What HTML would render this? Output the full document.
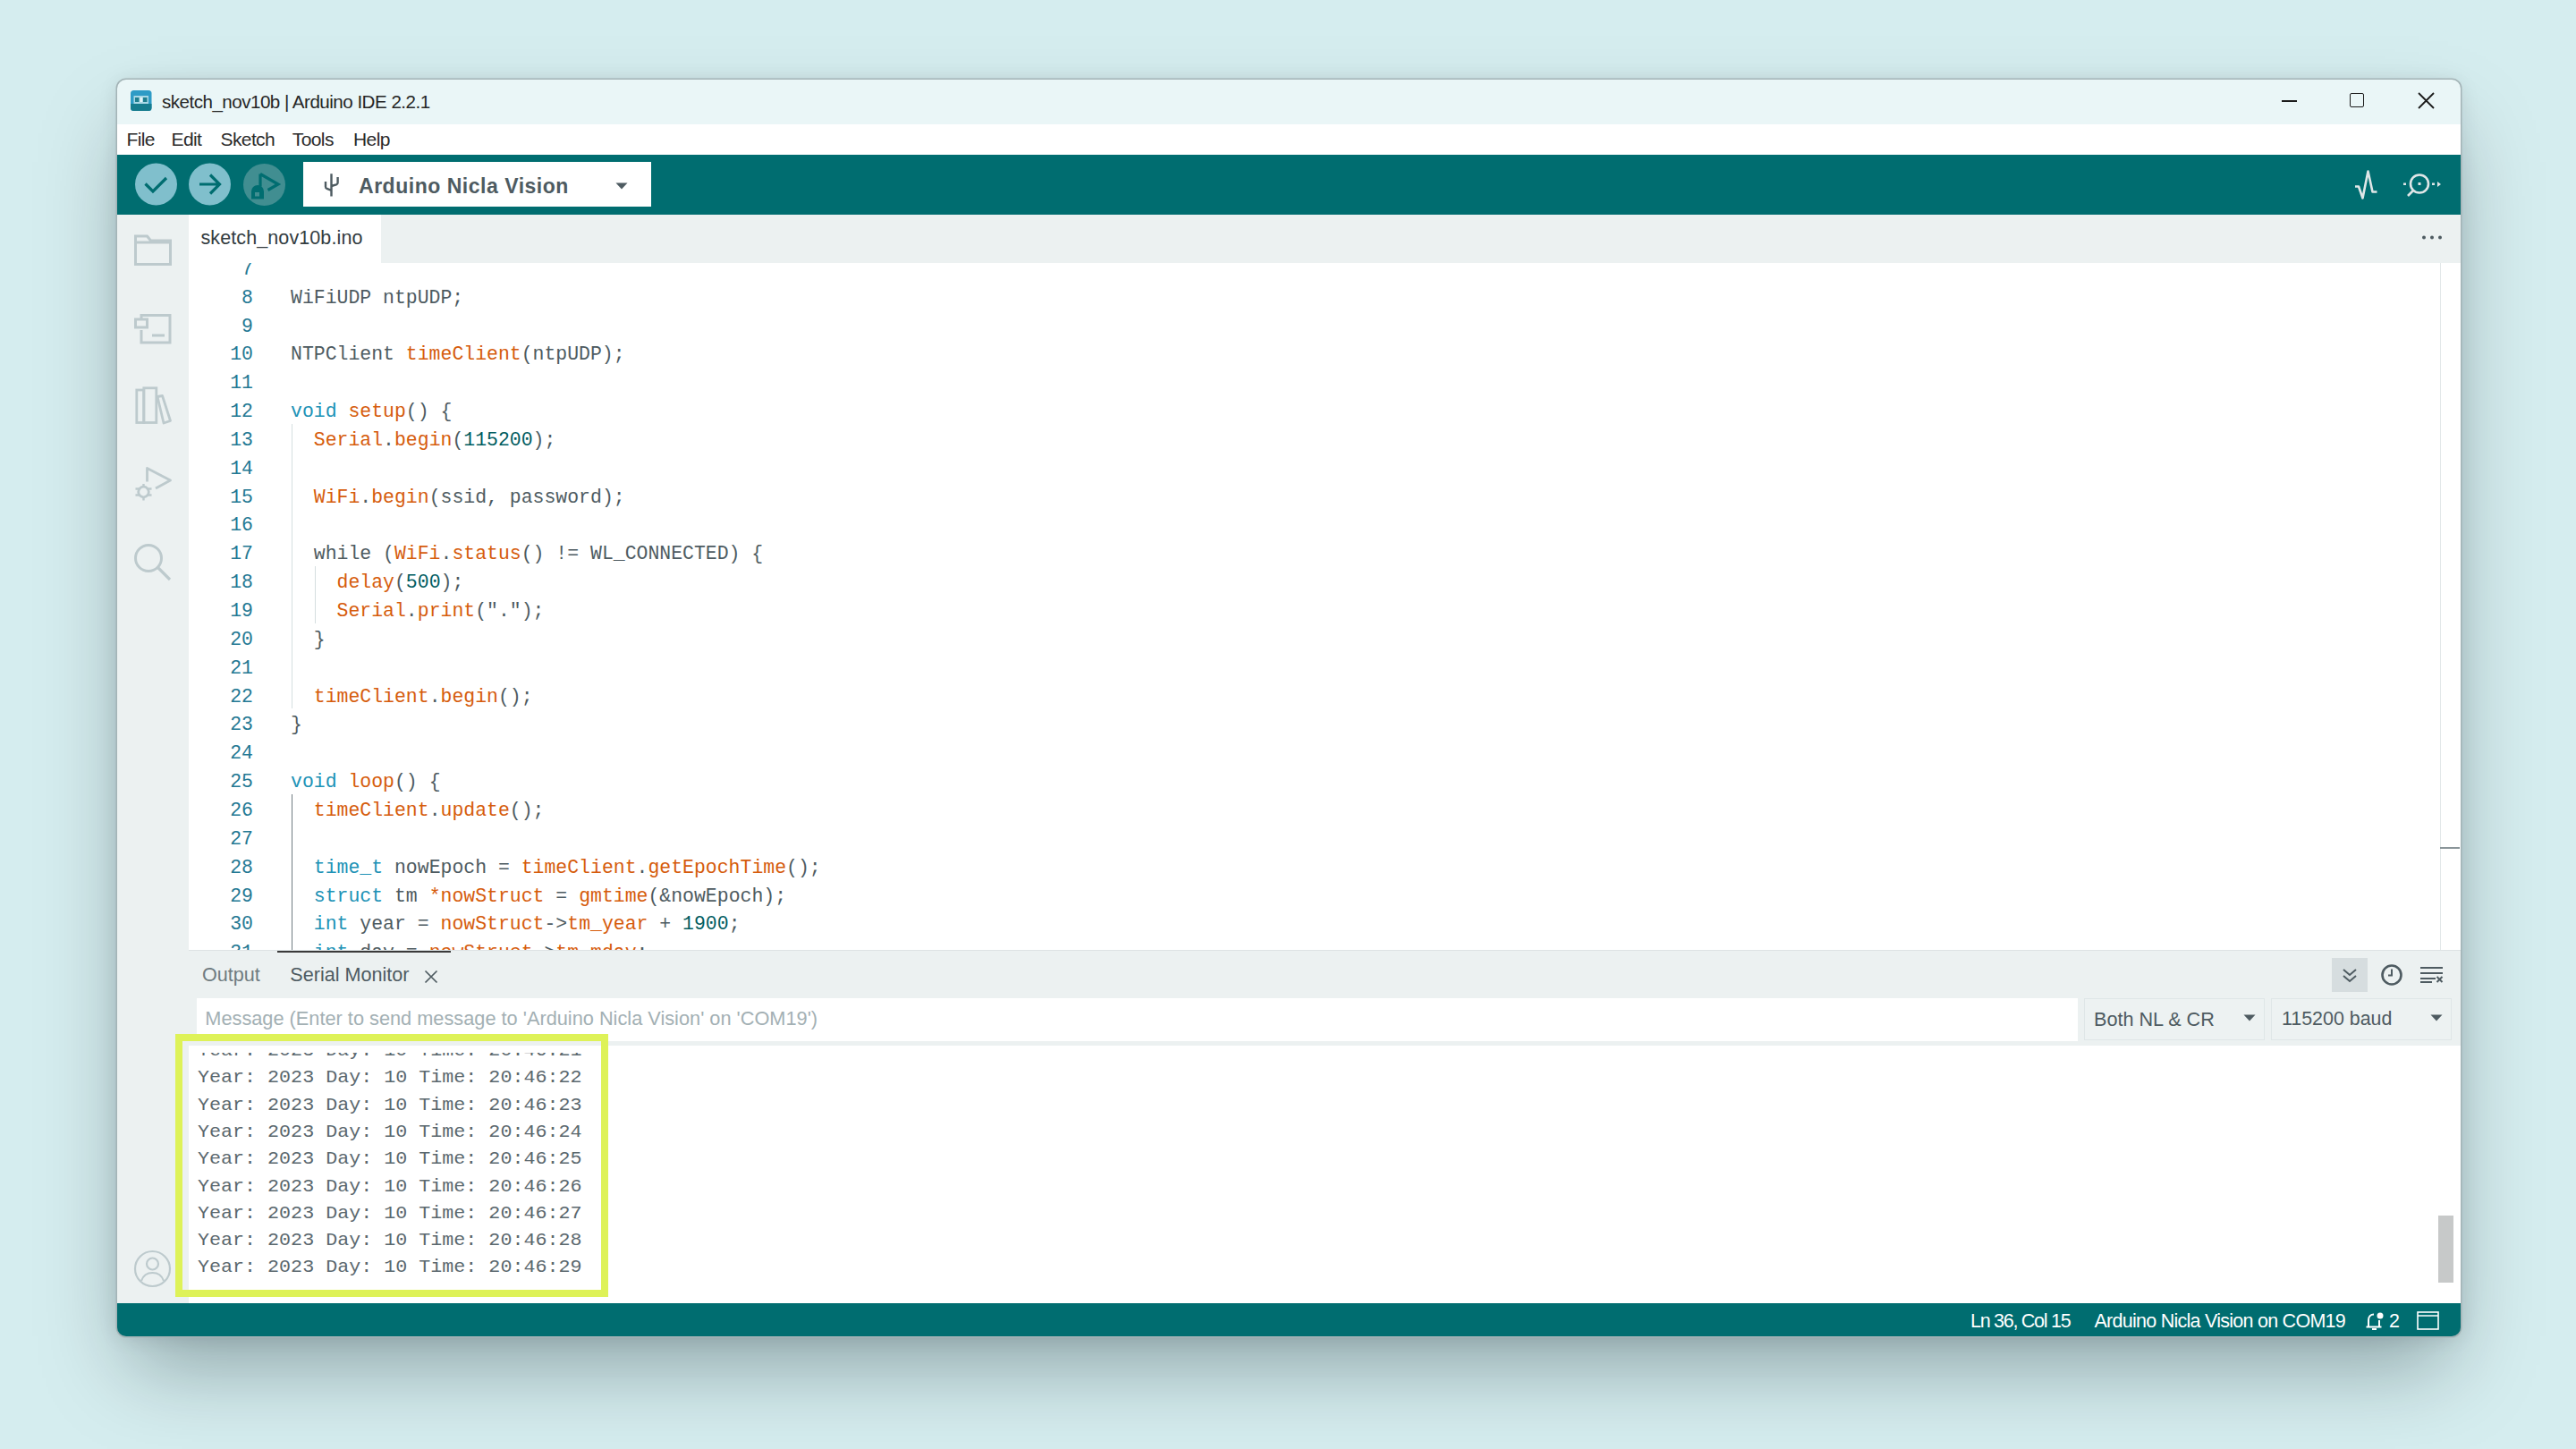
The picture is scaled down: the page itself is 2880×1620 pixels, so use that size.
<!DOCTYPE html>
<html><head><meta charset="utf-8">
<style>
html,body{margin:0;padding:0;}
body{width:2880px;height:1620px;overflow:hidden;background:#d5edef;position:relative;font-family:"Liberation Sans",sans-serif;}
.a{position:absolute;}
#shadow{position:absolute;left:131px;top:89px;width:2620px;height:1405px;border-radius:10px;background:#9fb2b5;
 box-shadow:0 0 0 1.5px #a3b3b6, 0 46px 90px -14px rgba(0,20,25,0.34), 0 2px 22px rgba(0,20,25,0.10);}
#win{position:absolute;left:0;top:0;width:2880px;height:1620px;clip-path:inset(89px 129px 126px 131px round 10px);}
.t{position:absolute;white-space:pre;line-height:1;}
.m{font-family:"Liberation Mono",monospace;}
.k{color:#2092b6}.f{color:#d65c0c}.n{color:#005c5f}
</style></head><body>
<div id="shadow"></div>
<div id="win">
<div class="a" style="left:131px;top:89px;width:2620px;height:50px;background:#eaf6f7"></div>
<div class="a" style="left:131px;top:139px;width:2620px;height:34px;background:#ffffff"></div>
<div class="a" style="left:131px;top:173px;width:2620px;height:67px;background:#006d70"></div>
<div class="a" style="left:131px;top:240px;width:80px;height:1218px;background:#ecf1f1"></div>
<div class="a" style="left:211px;top:240px;width:2540px;height:54px;background:#ecf1f1"></div>
<div class="a" style="left:211px;top:240px;width:215px;height:54px;background:#ffffff"></div>
<div class="a" style="left:211px;top:294px;width:2540px;height:769px;background:#ffffff"></div>
<div class="a" style="left:211px;top:1063px;width:2540px;height:106px;background:#ecf1f1"></div>
<div class="a" style="left:211px;top:1169px;width:2540px;height:289px;background:#ffffff"></div>
<div class="a" style="left:131px;top:1457.2px;width:2620px;height:37px;background:#006d70"></div>
<div class="t" style="left:181.0px;top:103.7px;font-size:20.6px;color:#262626;letter-spacing:-0.52px;font-weight:normal;">sketch_nov10b | Arduino IDE 2.2.1</div>
<svg class="a" style="left:146px;top:101px" width="24" height="24" viewBox="0 0 24 24">
<rect x="0" y="0" width="23.5" height="23" rx="3.5" fill="#2e9bc6"/>
<path d="M0 15h23.5v4.5a3.5 3.5 0 0 1 -3.5 3.5h-16.5a3.5 3.5 0 0 1 -3.5 -3.5z" fill="#167c8e"/>
<rect x="3.5" y="6" width="16.5" height="9" fill="#a9d8e6"/>
<rect x="5" y="8" width="4.5" height="5" fill="#1f7f8f"/>
<rect x="10.5" y="8" width="2.5" height="5" fill="#e6f3f6"/>
<rect x="14" y="8" width="4.5" height="5" fill="#1f7f8f"/>
</svg>
<div class="a" style="left:2551px;top:112px;width:17px;height:1.5px;background:#1b1b1b"></div>
<div class="a" style="left:2627px;top:104px;width:13.6px;height:14px;border:1.8px solid #1b1b1b;border-radius:2px"></div>
<svg class="a" style="left:2703px;top:103px" width="19" height="19" viewBox="0 0 19 19"><path d="M1 1L18 18M18 1L1 18" stroke="#1b1b1b" stroke-width="1.8"/></svg>
<div class="t" style="left:141.5px;top:144.7px;font-size:21px;color:#2b2b2b;letter-spacing:-0.6px;font-weight:normal;">File</div>
<div class="t" style="left:191.5px;top:144.7px;font-size:21px;color:#2b2b2b;letter-spacing:-0.6px;font-weight:normal;">Edit</div>
<div class="t" style="left:246.5px;top:144.7px;font-size:21px;color:#2b2b2b;letter-spacing:-0.6px;font-weight:normal;">Sketch</div>
<div class="t" style="left:326.8px;top:144.7px;font-size:21px;color:#2b2b2b;letter-spacing:-0.6px;font-weight:normal;">Tools</div>
<div class="t" style="left:395.0px;top:144.7px;font-size:21px;color:#2b2b2b;letter-spacing:-0.6px;font-weight:normal;">Help</div>
<svg class="a" style="left:150px;top:181px" width="170" height="50" viewBox="0 0 170 50">
<circle cx="24.5" cy="25" r="23.5" fill="#80bfcc"/>
<path d="M12.5 24.5l8.5 8.5l15-15" fill="none" stroke="#006d70" stroke-width="3.2"/>
<circle cx="84.5" cy="25" r="23.5" fill="#80bfcc"/>
<path d="M73 25h22M85 14.5l10.5 10.5l-10.5 10.5" fill="none" stroke="#006d70" stroke-width="3.2"/>
<circle cx="145.5" cy="25.5" r="23.5" fill="#418e91"/>
<path d="M141 13.5v14M141 13.5l20 11.5l-11.5 6.5" fill="none" stroke="#006d70" stroke-width="3.2" stroke-linejoin="miter"/>
<path d="M131 41.5v-8.5a7 7 0 0 1 14 0v8.5z" fill="#006d70"/>
<rect x="135" y="34" width="5" height="4.5" fill="#418e91"/>
</svg>
<div class="a" style="left:339px;top:181px;width:389px;height:50px;background:#fff"></div>
<svg class="a" style="left:360px;top:193px" width="24" height="28" viewBox="0 0 24 28">
<path d="M10.5 1.2V26.5M4 10V15.8Q4 17.3 5.5 18L10.5 19.8M17.6 5V11.2Q17.6 12.8 16 13.4L10.5 15" fill="none" stroke="#4e5b61" stroke-width="2.4"/>
</svg>
<div class="t" style="left:401.0px;top:197.4px;font-size:23px;color:#4e5b61;letter-spacing:0.52px;font-weight:bold;">Arduino Nicla Vision</div>
<svg class="a" style="left:688px;top:204px" width="14" height="8" viewBox="0 0 14 8"><path d="M0.5 0.5h13l-6.5 7z" fill="#4e5b61"/></svg>
<svg class="a" style="left:2630px;top:189px" width="34" height="36" viewBox="0 0 34 36">
<path d="M3 19.5h4l4.5 13l6-30l5 23h5" fill="none" stroke="#dfe6e7" stroke-width="2.6" stroke-linejoin="round"/>
</svg>
<svg class="a" style="left:2684px;top:191.5px" width="48" height="32" viewBox="0 0 48 32">
<circle cx="21" cy="13.5" r="10" fill="none" stroke="#dfe6e7" stroke-width="2.6"/>
<rect x="19.5" y="12" width="3" height="3" fill="#dfe6e7"/>
<path d="M14 21l-6 6" stroke="#dfe6e7" stroke-width="2.6"/>
<rect x="3" y="12.5" width="3" height="2.5" fill="#dfe6e7"/>
<rect x="35" y="12.5" width="3" height="2.5" fill="#dfe6e7"/>
<path d="M41 11l4 3l-4 3z" fill="#dfe6e7"/>
</svg>
<svg class="a" style="left:148px;top:260px" width="46" height="40" viewBox="0 0 46 40">
<path d="M3.5 35.5V4h13l4 5h22v26.5z M3.5 11h39" fill="none" stroke="#bdcacd" stroke-width="3"/>
</svg>
<svg class="a" style="left:148px;top:349px" width="46" height="38" viewBox="0 0 46 38">
<path d="M10 8V3.5h32v30.5H10V20" fill="none" stroke="#bdcacd" stroke-width="3"/>
<rect x="3.5" y="8" width="13" height="9" fill="none" stroke="#bdcacd" stroke-width="3"/>
<path d="M22 26h14" stroke="#bdcacd" stroke-width="3"/>
</svg>
<svg class="a" style="left:148px;top:431px" width="46" height="44" viewBox="0 0 46 44">
<rect x="4.8" y="5" width="8" height="36.5" fill="none" stroke="#bdcacd" stroke-width="2.8"/>
<rect x="12.8" y="2.8" width="14" height="38.7" fill="none" stroke="#bdcacd" stroke-width="2.8"/>
<path d="M28 12.5l5.5-1l9 28l-7.5 2.5z" fill="none" stroke="#bdcacd" stroke-width="2.8" stroke-linejoin="round"/>
</svg>
<svg class="a" style="left:148px;top:519px" width="46" height="44" viewBox="0 0 46 44">
<path d="M16.5 19.5V4.5l26 13.5l-16.5 9" fill="none" stroke="#bdcacd" stroke-width="2.8" stroke-linejoin="round"/>
<circle cx="12.5" cy="31" r="5.8" fill="none" stroke="#bdcacd" stroke-width="2.8"/>
<path d="M3.5 27.5h4M3.5 34.5h4M17.5 27.5h4M17.5 34.5h4M12.5 22v3.5M12.5 37v3.5" stroke="#bdcacd" stroke-width="2.4"/>
</svg>
<svg class="a" style="left:148px;top:606px" width="46" height="46" viewBox="0 0 46 46">
<circle cx="18" cy="18" r="14.5" fill="none" stroke="#bdcacd" stroke-width="3"/>
<path d="M28.5 28.5L42 42" stroke="#bdcacd" stroke-width="3.2"/>
</svg>
<svg class="a" style="left:148px;top:1396px" width="46" height="46" viewBox="0 0 46 46">
<circle cx="22.5" cy="22.5" r="19.5" fill="none" stroke="#bdcacd" stroke-width="2.2"/>
<circle cx="22.5" cy="17" r="6.5" fill="none" stroke="#bdcacd" stroke-width="2.2"/>
<path d="M10 36c2-6 7-9 12.5-9s10.5 3 12.5 9" fill="none" stroke="#bdcacd" stroke-width="2.2"/>
</svg>
<div class="t" style="left:224.5px;top:256.3px;font-size:21.5px;color:#333c40;letter-spacing:0.1px;font-weight:normal;">sketch_nov10b.ino</div>
<svg class="a" style="left:2706px;top:261px" width="26" height="9" viewBox="0 0 26 9">
<circle cx="4" cy="4.5" r="2" fill="#4e5b61"/><circle cx="13" cy="4.5" r="2" fill="#4e5b61"/><circle cx="22" cy="4.5" r="2" fill="#4e5b61"/></svg>
<div class="a" style="left:211px;top:294px;width:2517px;height:769px;overflow:hidden">
<div class="t m" style="left:-28px;top:-3.17px;width:100px;text-align:right;font-size:21.47px;color:#237893">7</div>
<div class="t m" style="left:-28px;top:28.68px;width:100px;text-align:right;font-size:21.47px;color:#237893">8</div>
<div class="t m" style="left:114px;top:28.68px;font-size:21.47px;color:#4e5b61">WiFiUDP ntpUDP;</div>
<div class="t m" style="left:-28px;top:60.53px;width:100px;text-align:right;font-size:21.47px;color:#237893">9</div>
<div class="t m" style="left:-28px;top:92.38px;width:100px;text-align:right;font-size:21.47px;color:#237893">10</div>
<div class="t m" style="left:114px;top:92.38px;font-size:21.47px;color:#4e5b61">NTPClient <span class="f">timeClient</span>(ntpUDP);</div>
<div class="t m" style="left:-28px;top:124.23px;width:100px;text-align:right;font-size:21.47px;color:#237893">11</div>
<div class="t m" style="left:-28px;top:156.08px;width:100px;text-align:right;font-size:21.47px;color:#237893">12</div>
<div class="t m" style="left:114px;top:156.08px;font-size:21.47px;color:#4e5b61"><span class="k">void</span> <span class="f">setup</span>() {</div>
<div class="t m" style="left:-28px;top:187.93px;width:100px;text-align:right;font-size:21.47px;color:#237893">13</div>
<div class="t m" style="left:114px;top:187.93px;font-size:21.47px;color:#4e5b61">  <span class="f">Serial</span>.<span class="f">begin</span>(<span class="n">115200</span>);</div>
<div class="t m" style="left:-28px;top:219.78px;width:100px;text-align:right;font-size:21.47px;color:#237893">14</div>
<div class="t m" style="left:-28px;top:251.63px;width:100px;text-align:right;font-size:21.47px;color:#237893">15</div>
<div class="t m" style="left:114px;top:251.63px;font-size:21.47px;color:#4e5b61">  <span class="f">WiFi</span>.<span class="f">begin</span>(ssid, password);</div>
<div class="t m" style="left:-28px;top:283.48px;width:100px;text-align:right;font-size:21.47px;color:#237893">16</div>
<div class="t m" style="left:-28px;top:315.33px;width:100px;text-align:right;font-size:21.47px;color:#237893">17</div>
<div class="t m" style="left:114px;top:315.33px;font-size:21.47px;color:#4e5b61">  while (<span class="f">WiFi</span>.<span class="f">status</span>() != WL_CONNECTED) {</div>
<div class="t m" style="left:-28px;top:347.18px;width:100px;text-align:right;font-size:21.47px;color:#237893">18</div>
<div class="t m" style="left:114px;top:347.18px;font-size:21.47px;color:#4e5b61">    <span class="f">delay</span>(<span class="n">500</span>);</div>
<div class="t m" style="left:-28px;top:379.03px;width:100px;text-align:right;font-size:21.47px;color:#237893">19</div>
<div class="t m" style="left:114px;top:379.03px;font-size:21.47px;color:#4e5b61">    <span class="f">Serial</span>.<span class="f">print</span>(".");</div>
<div class="t m" style="left:-28px;top:410.88px;width:100px;text-align:right;font-size:21.47px;color:#237893">20</div>
<div class="t m" style="left:114px;top:410.88px;font-size:21.47px;color:#4e5b61">  }</div>
<div class="t m" style="left:-28px;top:442.73px;width:100px;text-align:right;font-size:21.47px;color:#237893">21</div>
<div class="t m" style="left:-28px;top:474.58px;width:100px;text-align:right;font-size:21.47px;color:#237893">22</div>
<div class="t m" style="left:114px;top:474.58px;font-size:21.47px;color:#4e5b61">  <span class="f">timeClient</span>.<span class="f">begin</span>();</div>
<div class="t m" style="left:-28px;top:506.43px;width:100px;text-align:right;font-size:21.47px;color:#237893">23</div>
<div class="t m" style="left:114px;top:506.43px;font-size:21.47px;color:#4e5b61">}</div>
<div class="t m" style="left:-28px;top:538.28px;width:100px;text-align:right;font-size:21.47px;color:#237893">24</div>
<div class="t m" style="left:-28px;top:570.13px;width:100px;text-align:right;font-size:21.47px;color:#237893">25</div>
<div class="t m" style="left:114px;top:570.13px;font-size:21.47px;color:#4e5b61"><span class="k">void</span> <span class="f">loop</span>() {</div>
<div class="t m" style="left:-28px;top:601.98px;width:100px;text-align:right;font-size:21.47px;color:#237893">26</div>
<div class="t m" style="left:114px;top:601.98px;font-size:21.47px;color:#4e5b61">  <span class="f">timeClient</span>.<span class="f">update</span>();</div>
<div class="t m" style="left:-28px;top:633.83px;width:100px;text-align:right;font-size:21.47px;color:#237893">27</div>
<div class="t m" style="left:-28px;top:665.68px;width:100px;text-align:right;font-size:21.47px;color:#237893">28</div>
<div class="t m" style="left:114px;top:665.68px;font-size:21.47px;color:#4e5b61">  <span class="k">time_t</span> nowEpoch = <span class="f">timeClient</span>.<span class="f">getEpochTime</span>();</div>
<div class="t m" style="left:-28px;top:697.53px;width:100px;text-align:right;font-size:21.47px;color:#237893">29</div>
<div class="t m" style="left:114px;top:697.53px;font-size:21.47px;color:#4e5b61">  <span class="k">struct</span> tm <span class="f">*nowStruct</span> = <span class="f">gmtime</span>(&amp;nowEpoch);</div>
<div class="t m" style="left:-28px;top:729.38px;width:100px;text-align:right;font-size:21.47px;color:#237893">30</div>
<div class="t m" style="left:114px;top:729.38px;font-size:21.47px;color:#4e5b61">  <span class="k">int</span> year = <span class="f">nowStruct</span>-&gt;<span class="f">tm_year</span> + <span class="n">1900</span>;</div>
<div class="t m" style="left:-28px;top:761.23px;width:100px;text-align:right;font-size:21.47px;color:#237893">31</div>
<div class="t m" style="left:114px;top:761.23px;font-size:21.47px;color:#4e5b61">  <span class="k">int</span> day = <span class="f">nowStruct</span>-&gt;<span class="f">tm_mday</span>;</div>
<div class="a" style="left:114.5px;top:179.7px;width:1.5px;height:318.5px;background:#d5dfe0"></div>
<div class="a" style="left:140.5px;top:338.9px;width:1.5px;height:63.7px;background:#d5dfe0"></div>
<div class="a" style="left:114.5px;top:593.7px;width:1.6px;height:191.1px;background:#707d82"></div>
</div>
<div class="a" style="left:2727.5px;top:294px;width:1px;height:769px;background:#e3e8e9"></div>
<div class="a" style="left:2728px;top:947px;width:22px;height:2px;background:#8a9599"></div>
<div class="a" style="left:211px;top:1062px;width:2540px;height:1px;background:#dde3e4"></div>
<div class="a" style="left:310px;top:1063px;width:194px;height:2px;background:#3a3a3a"></div>
<div class="t" style="left:226.0px;top:1078.6px;font-size:21.6px;color:#6f7b80;letter-spacing:0px;font-weight:normal;">Output</div>
<div class="t" style="left:324.3px;top:1078.6px;font-size:21.6px;color:#4e5b61;letter-spacing:0px;font-weight:normal;">Serial Monitor</div>
<svg class="a" style="left:474px;top:1084px" width="16" height="16" viewBox="0 0 16 16"><path d="M1.5 1.5l13 13M14.5 1.5l-13 13" stroke="#4e5b61" stroke-width="1.7"/></svg>
<div class="a" style="left:2607px;top:1070.5px;width:40px;height:38px;background:#d6dddf"></div>
<svg class="a" style="left:2618px;top:1082px" width="18" height="17" viewBox="0 0 18 17"><path d="M2 2l7 6l7-6M2 9l7 6l7-6" fill="none" stroke="#4e5b61" stroke-width="2"/></svg>
<svg class="a" style="left:2661px;top:1077px" width="26" height="26" viewBox="0 0 26 26"><circle cx="13" cy="13" r="10.5" fill="none" stroke="#4e5b61" stroke-width="2.6"/><path d="M13 6.5v7h-4" fill="none" stroke="#4e5b61" stroke-width="2"/></svg>
<svg class="a" style="left:2705px;top:1080px" width="28" height="20" viewBox="0 0 28 20"><path d="M1 2h25M1 8h25M1 14h17M1 18h13" fill="none" stroke="#4e5b61" stroke-width="2"/><path d="M19.5 12l6 6M25.5 12l-6 6" stroke="#4e5b61" stroke-width="2"/></svg>
<div class="a" style="left:220px;top:1115.5px;width:2103px;height:48px;background:#fff"></div>
<div class="t" style="left:229.3px;top:1128.3px;font-size:21.75px;color:#a3b0b4;letter-spacing:0px;font-weight:normal;">Message (Enter to send message to 'Arduino Nicla Vision' on 'COM19')</div>
<div class="a" style="left:2329.5px;top:1116px;width:200px;height:45px;background:#edf2f2;border:1px solid #dfe6e7"></div>
<div class="a" style="left:2539px;top:1116px;width:200px;height:45px;background:#edf2f2;border:1px solid #dfe6e7"></div>
<div class="t" style="left:2341.0px;top:1128.6px;font-size:21.6px;color:#4e5b61;letter-spacing:0px;font-weight:normal;">Both NL &amp; CR</div>
<div class="t" style="left:2551.0px;top:1128.8px;font-size:21.4px;color:#4e5b61;letter-spacing:0px;font-weight:normal;">115200 baud</div>
<svg class="a" style="left:2508px;top:1134px" width="14" height="8" viewBox="0 0 14 8"><path d="M0.5 0.5h13l-6.5 7z" fill="#4e5b61"/></svg>
<svg class="a" style="left:2717px;top:1134px" width="14" height="8" viewBox="0 0 14 8"><path d="M0.5 0.5h13l-6.5 7z" fill="#4e5b61"/></svg>
<div class="a" style="left:211px;top:1177px;width:2540px;height:281px;overflow:hidden">
<div class="t m" style="left:10px;top:-12.99px;font-size:21.7px;color:#5b686e;transform:scaleY(0.92);transform-origin:0 16.5px">Year: 2023 Day: 10 Time: 20:46:21</div>
<div class="t m" style="left:10px;top:17.31px;font-size:21.7px;color:#5b686e;transform:scaleY(0.92);transform-origin:0 16.5px">Year: 2023 Day: 10 Time: 20:46:22</div>
<div class="t m" style="left:10px;top:47.61px;font-size:21.7px;color:#5b686e;transform:scaleY(0.92);transform-origin:0 16.5px">Year: 2023 Day: 10 Time: 20:46:23</div>
<div class="t m" style="left:10px;top:77.91px;font-size:21.7px;color:#5b686e;transform:scaleY(0.92);transform-origin:0 16.5px">Year: 2023 Day: 10 Time: 20:46:24</div>
<div class="t m" style="left:10px;top:108.21px;font-size:21.7px;color:#5b686e;transform:scaleY(0.92);transform-origin:0 16.5px">Year: 2023 Day: 10 Time: 20:46:25</div>
<div class="t m" style="left:10px;top:138.51px;font-size:21.7px;color:#5b686e;transform:scaleY(0.92);transform-origin:0 16.5px">Year: 2023 Day: 10 Time: 20:46:26</div>
<div class="t m" style="left:10px;top:168.81px;font-size:21.7px;color:#5b686e;transform:scaleY(0.92);transform-origin:0 16.5px">Year: 2023 Day: 10 Time: 20:46:27</div>
<div class="t m" style="left:10px;top:199.11px;font-size:21.7px;color:#5b686e;transform:scaleY(0.92);transform-origin:0 16.5px">Year: 2023 Day: 10 Time: 20:46:28</div>
<div class="t m" style="left:10px;top:229.41px;font-size:21.7px;color:#5b686e;transform:scaleY(0.92);transform-origin:0 16.5px">Year: 2023 Day: 10 Time: 20:46:29</div>
</div>
<div class="a" style="left:2725.5px;top:1358.5px;width:17px;height:75px;background:#c7c9c9"></div>
<div class="a" style="left:195.7px;top:1156px;width:468.5px;height:278px;border:8px solid #def258"></div>
<div class="t" style="left:2203.0px;top:1467.2px;font-size:21.5px;color:#fff;letter-spacing:-1.27px;font-weight:normal;">Ln 36, Col 15</div>
<div class="t" style="left:2341.5px;top:1467.2px;font-size:21.5px;color:#fff;letter-spacing:-0.74px;font-weight:normal;">Arduino Nicla Vision on COM19</div>
<svg class="a" style="left:2643px;top:1466px" width="24" height="22" viewBox="0 0 24 22">
<path d="M5 17V10c0-4 2.5-6.5 6-6.5M17 10v7M2.5 17.5h17M9 20h5" fill="none" stroke="#fff" stroke-width="2"/>
<circle cx="18" cy="5" r="3.5" fill="#fff"/></svg>
<div class="t" style="left:2671.0px;top:1467.2px;font-size:21.5px;color:#fff;letter-spacing:0px;font-weight:normal;">2</div>
<svg class="a" style="left:2702px;top:1466px" width="25" height="21" viewBox="0 0 25 21"><rect x="1" y="1" width="23" height="19" fill="none" stroke="#fff" stroke-width="1.6"/><path d="M1 5h23" stroke="#fff" stroke-width="1.4"/></svg>

</div>
</body></html>
